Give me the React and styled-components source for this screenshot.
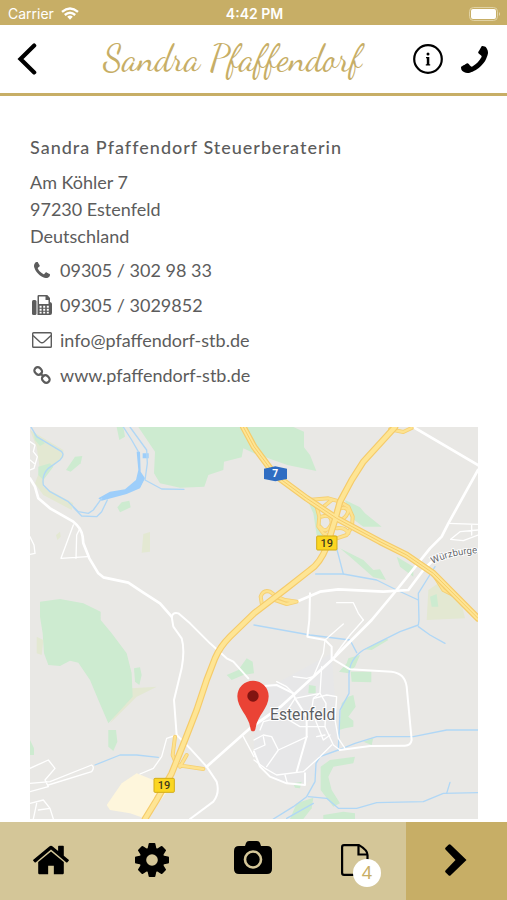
import React from 'react';
import styled, { createGlobalStyle } from 'styled-components';

const GlobalStyle = createGlobalStyle`
  * {
    box-sizing: border-box;
  }

  body {
    margin: 0;
    background: #ffffff;
    color: #5c5c5c;
    font-family: Lato, 'Noto Sans', sans-serif;
  }
`;

const Page = styled.div`
  display: flex;
  flex-direction: column;
  min-height: 100vh;
`;

const StatusBar = styled.div`
  display: grid;
  grid-template-columns: 1fr auto 1fr;
  align-items: center;
  height: 25px;
  padding: 2px 6px 0 8px;
  background: #c7ae66;
  color: #ffffff;
  font-family: Inter, sans-serif;
  font-size: 14px;
`;

const Carrier = styled.span`
  display: flex;
  align-items: center;
  gap: 7px;
`;

const Clock = styled.span`
  font-weight: 600;
`;

const BatteryIcon = styled.svg`
  justify-self: end;
`;

const Header = styled.header`
  display: flex;
  align-items: center;
  height: 71px;
  padding: 0 19px 0 16px;
  border-bottom: 3px solid #c7ae66;
`;

const HeaderActions = styled.div`
  display: flex;
  align-items: center;
  gap: 18px;
`;

const IconButton = styled.button`
  display: flex;
  padding: 0;
  border: 0;
  background: none;
  color: #000000;
  cursor: pointer;
`;

const Brand = styled.div`
  flex: 1;
  padding: 0 0 2px 14px;
  color: #c7ae66;
  font-family: 'Dancing Script', cursive;
  font-size: 36px;
  text-align: center;
  white-space: nowrap;
`;

const Main = styled.main`
  padding: 34px 29px 3px 30px;
`;

const Name = styled.h1`
  margin: 0;
  font-size: 18px;
  font-weight: 500;
  letter-spacing: 1px;
  line-height: 35px;
`;

const Address = styled.address`
  margin-top: 4px;
  font-size: 18px;
  font-style: normal;
  line-height: 27px;
`;

const ContactList = styled.ul`
  margin: 2px 0 35px;
  padding: 0;
  list-style: none;
`;

const ContactLink = styled.a`
  display: flex;
  align-items: center;
  gap: 6px;
  height: 35px;
  color: inherit;
  font-size: 18px;
  text-decoration: none;
`;

const ContactIcon = styled.span`
  display: flex;
  justify-content: center;
  width: 24px;
`;

const Map = styled.svg`
  display: block;
  width: 100%;
  height: auto;
  background: #e9e8e5;
  font-family: Roboto, sans-serif;
`;

const TabBar = styled.nav`
  position: sticky;
  bottom: 0;
  display: grid;
  grid-template-columns: repeat(5, 1fr);
  height: 78px;
  margin-top: auto;
  background: #d4c698;
`;

const Tab = styled.button`
  display: flex;
  align-items: center;
  justify-content: center;
  padding: 0 0 2px;
  border: 0;
  background: ${({ $active }) => ($active ? '#c7ae66' : 'transparent')};
  color: #000000;
  cursor: pointer;
`;

const BadgeAnchor = styled.span`
  position: relative;
  display: flex;
`;

const Badge = styled.span`
  position: absolute;
  right: -12px;
  bottom: -11px;
  width: 28px;
  height: 28px;
  border-radius: 50%;
  background: #ffffff;
  color: #c7ae66;
  font-family: 'Noto Sans', sans-serif;
  font-size: 18px;
  line-height: 27px;
  text-align: center;
`;

const PHONE_PATH =
  'M1408 1112q0 27-10 70.5t-21 68.5q-21 50-122 106-94 51-186 51-27 0-53-3.5t-57.5-12.5-47-14.5-55.5-20.5-49-18q-98-35-175-83-127-79-264-216t-216-264q-48-77-83-175-3-9-18-49t-20.5-55.5-14.5-47-12.5-57.5-3.5-53q0-92 51-186 56-101 106-122 25-11 68.5-21t70.5-10q14 0 21 3 18 6 53 76 11 19 30 54t35 63.5 31 53.5q3 4 17.5 25t21.5 35.5 7 28.5q0 20-28.5 50t-62 55-62 53-28.5 46q0 9 5 22.5t8.5 20.5 14 24 11.5 19q76 137 174 235t235 174q2 1 19 11.5t24 14 20.5 8.5 22.5 5q18 0 46-28.5t53-62 55-62 50-28.5q14 0 28.5 7t35.5 21.5 25 17.5q25 15 53.5 31t63.5 35 54 30q70 35 76 53 3 7 3 21z';

const WifiIcon = () => (
  <svg width="18" height="13" viewBox="0 0 18 13" fill="none" stroke="#ffffff" strokeWidth="2.4">
    <path d="M1 4.8Q9-2 17 4.8" />
    <path d="M3.8 8Q9 3.4 14.2 8" />
    <path d="M6.2 9.8Q9 7.4 11.8 9.8L9 12.8z" fill="#ffffff" stroke="none" />
  </svg>
);

const Battery = () => (
  <BatteryIcon width="32" height="14" viewBox="0 0 32 14">
    <rect x="0.5" y="0.5" width="28" height="13" rx="4" fill="none" stroke="#e0d2a4" />
    <rect x="2" y="2" width="25" height="10" rx="2" fill="#ffffff" />
    <path d="M30 5q2 2 0 4z" fill="#e6dab6" />
  </BatteryIcon>
);

const PhoneIcon = ({ size, flipped }) => (
  <svg width={size} height={size} viewBox="0 0 1408 1408" fill="currentColor">
    <path d={PHONE_PATH} transform={flipped ? 'translate(1408 0) scale(-1 1)' : undefined} />
  </svg>
);

const BackIcon = () => (
  <svg width="22" height="32" viewBox="0 0 22 32" fill="none" stroke="currentColor" strokeWidth="4.2">
    <path d="M18.200 2.600L4.500 16l13.700 13.400" strokeLinecap="round" />
  </svg>
);

const InfoIcon = () => (
  <svg width="30" height="30" viewBox="0 0 30 30">
    <circle cx="15" cy="15" r="13.8" fill="none" stroke="currentColor" strokeWidth="2.2" />
    <circle cx="15" cy="10" r="1.5" fill="currentColor" />
    <path d="M13 13h3.300v7.300h.9v1.200h-4.400v-1.200h1v-6h-.8z" fill="currentColor" />
  </svg>
);

const FaxIcon = () => (
  <svg width="20" height="20" viewBox="0 0 20 20" fill="currentColor">
    <rect x="0" y="5" width="4.5" height="15" rx="1.5" />
    <path
      fillRule="evenodd"
      d="M5.5 1.2Q5.5 0 6.7 0h8.6L18 3v4q2 .5 2 2v9q0 2-2 2H5.5zM7 1.5V9h9.5V5h-3V1.5zM7.6 10.8v2h2v-2zm3.6 0v2h2v-2zm3.6 0v2h2v-2zM7.6 13.8v2h2v-2zm3.6 0v2h2v-2zm3.6 0v2h2v-2zM7.6 16.8v1.6h2v-1.6zm3.6 0v1.6h2v-1.6zm3.6 0v1.6h2v-1.6z"
    />
  </svg>
);

const MailIcon = () => (
  <svg width="20" height="16" viewBox="0 0 20 16" fill="none" stroke="currentColor" strokeWidth="1.4">
    <rect x="0.7" y="0.7" width="18.6" height="14.6" rx="0.8" />
    <path d="M1 3.500l7 6.500q2 1.500 4 0l7-6.500" />
  </svg>
);

const LinkIcon = () => (
  <svg width="18" height="18" viewBox="0 0 18 18" fill="none" stroke="currentColor" strokeWidth="2.2">
    <rect x="1.200" y="1.700" width="8" height="6.600" rx="3.200" transform="rotate(45 5.200 5)" />
    <rect x="8.800" y="9.700" width="8" height="6.600" rx="3.200" transform="rotate(45 12.800 13)" />
    <path d="M7 7l4 4" />
  </svg>
);

const HomeIcon = () => (
  <svg width="36" height="30" viewBox="86 232 1620 1320" fill="currentColor">
    <path d="M1472 992v480q0 26-19 45t-45 19h-384v-384h-256v384h-384q-26 0-45-19t-19-45v-480q0-1 .5-3t.5-3l575-474 575 474q1 2 1 6zm223-69l-62 74q-8 9-21 11h-3q-13 0-21-7l-692-577-692 577q-12 8-24 7-13-2-21-11l-62-74q-8-10-7-23.5t11-21.5l719-599q32-26 76-26t76 26l244 204v-195q0-14 9-23t23-9h192q14 0 23 9t9 23v408l219 182q10 8 11 21.5t-7 23.5z" />
  </svg>
);

const GearIcon = () => (
  <svg width="34" height="34" viewBox="-17 -17 34 34">
    {[0, 45, 90, 135].map((angle) => (
      <path
        key={angle}
        d="M-3.400-16q0-1 1-1h4.800q1 0 1 1l1.100 5v22l-1.100 5q0 1-1 1h-4.800q-1 0-1-1l-1.100-5v-22z"
        transform={`rotate(${angle})`}
        fill="currentColor"
      />
    ))}
    <circle r="12.500" fill="currentColor" />
    <circle r="5.800" fill="#d4c698" />
  </svg>
);

const CameraIcon = () => (
  <svg width="38" height="38" viewBox="0 0 38 38">
    <path
      d="M5 5h6l1-3q.7-2 3-2h8q2.300 0 3 2l1 3h6q5 0 5 5v18q0 5-5 5H5q-5 0-5-5V10q0-5 5-5z"
      fill="currentColor"
    />
    <circle cx="19" cy="18.500" r="8" fill="none" stroke="#d4c698" strokeWidth="2.600" />
  </svg>
);

const DocumentIcon = () => (
  <svg width="28" height="32" viewBox="0 0 28 32" fill="none" stroke="currentColor" strokeWidth="2.200">
    <path d="M3 1.100h15Q26.500 6 26.500 11v19.900H3q-1.900 0-1.900-1.900V3q0-1.900 1.900-1.900z" />
    <path d="M17.500 1v9.500h9" />
  </svg>
);

const NextIcon = () => (
  <svg width="22" height="32" viewBox="0 0 22 32" fill="currentColor">
    <path d="M.5 5.500Q-.3 4.500.7 3.500L3.500.7Q4.600-.3 5.700.7L21.500 16 5.700 31.300Q4.600 32.300 3.500 31.300L.7 28.500Q-.3 27.500.5 26.500L10.500 16z" />
  </svg>
);

const woods = [
  'M325 21L375 95L372 160L390 190L450 203L523 200L535 165L580 150L582 125L635 112L640 85L672 100L715 115L772 135L859 153L840 105L822 82V35L790 21z',
  'M30 545L90 537L160 550L212 575V600L245 640L290 700L305 760L308 830L235 910L205 840L180 780L145 728L120 722L90 738L55 735L42 700L38 640L30 590z',
  'M135 110L157 108L152 130L122 155L108 150z',
  'M262 262L275 247L298 242L302 262L270 277z',
  'M260 21H280L285 50L268 60z',
  'M25 140L60 130L70 140L40 180L25 165z',
  'M10 35L45 70L30 78L15 60z',
  'M312 745L330 742L335 765L328 795L315 785z',
  'M235 930L258 930L262 965L250 993L235 980z',
  'M0 960L12 985V1005H0z',
  'M832 240L860 240L880 350L860 345L850 280z',
  'M945 240L990 262L1005 280L1055 320L1000 320L960 290z',
  'M930 385L1000 420L1030 450L1050 448L1068 480L1030 472L960 410z',
  'M1100 410L1150 440V470L1110 440z',
  'M1200 530L1220 522L1225 560L1205 560z',
  'M590 765L625 750L650 715L668 725L672 760L640 765L605 780z',
  'M837 795L857 798V820L835 820z',
  'M962 755H1024V787L965 785z',
  'M927 755L950 730L955 715L990 705L975 740L955 760z',
  'M935 850L955 830L970 825L977 860L955 890L970 902V920L945 925L928 930z',
  'M1000 965L1030 955L1025 975z',
  'M872 1040L900 1020L975 1010L970 1030L910 1040L895 1070L905 1110L930 1150L910 1160L872 1110z',
  'M780 1197L800 1150L850 1133L845 1165L820 1197z',
  'M880 1185L940 1175L975 1180V1197H880z',
  'M790 1090L815 1085L810 1105L795 1103z',
  'M1002 688L1070 655L1075 660L1025 690z',
];

const meadows = [
  'M0 30L100 90V112L45 160L40 200L130 250L125 270L40 225L15 190L30 150L20 80z',
  'M340 342L360 336V395L335 398z',
  'M78 345L90 335L92 350L82 360z',
  'M1225 490L1290 530L1305 595L1190 600L1195 510z',
  'M305 805L380 800L320 830L240 910z',
  'M20 650L40 660L35 705L20 700z',
];

const streams = [
  'M3 21L20 50L95 95Q105 105 90 120L55 145Q35 165 40 195L60 215L115 245L145 275L175 280L190 270L215 235',
  'M130 262L155 288L200 290L215 275L232 240',
  'M280 21L305 60L325 95',
  'M300 21L350 90L352 130L345 180L395 207L462 208',
  'M195 1035L270 1005L320 1005L385 1012',
  'M857 462H940L1040 480L1100 510L1165 540',
  'M920 385L940 462',
  'M1215 440L1190 480L1165 520L1167 600L1165 615L1110 635L1050 665L1000 690Q955 720 957 770V820L930 870L925 990L870 1010L858 1030L855 1085L830 1130L790 1160L730 1197',
  'M672 615L840 645L960 660L980 698',
  'M1165 620L1200 645L1245 670',
  'M925 990L975 970L1040 950L1150 950L1250 930L1344 930',
  'M835 1130L890 1135L925 1165L980 1165L1040 1148L1180 1145L1240 1120L1344 1118',
  'M1250 1120L1260 1087',
  'M770 1195L850 1150',
];

const roads = [
  'M0 175L15 200L25 235L60 265L130 305Q155 325 158 350L160 370L178 415L205 460L220 472L295 488L340 518L390 550L425 590',
  'M1150 21L1344 135',
  'M1344 150L1255 310L1235 350L1200 385L1100 510L1025 600L905 720L752 860L660 925L530 1040',
  'M800 545L870 515L925 508L1060 515L1135 510L1180 450L1210 420Q1270 385 1344 390',
];

const streets = [
  'M425 590L430 620L455 655Q465 690 455 745L432 840L440 945',
  'M425 590Q430 575 445 580L480 610L540 670L590 715L610 725L655 775',
  'M440 945L480 985L530 1040L560 1085Q570 1120 550 1145L480 1197',
  'M840 520L838 600L832 650L885 660L905 680V715',
  'M905 715L960 748L1085 755Q1125 760 1130 800L1145 960Q1142 977 1125 977L1020 978L930 990',
  'M672 800L740 795L790 820L795 835L830 890V950L810 1020L800 1055',
  'M672 995L690 1040L720 1070L770 1090L825 1095V1060',
];

const lanes = [
  'M130 315L93 415L172 410M150 325L140 345L138 415',
  'M0 65L15 75L10 95L22 110L12 145L0 150M0 120L12 130',
  'M0 350L12 375L15 400L0 403',
  'M920 548L970 548L985 580L1000 600',
  'M1255 310L1344 313M1262 358L1290 335L1344 330M1262 358L1300 362L1344 345M1325 315V345',
  'M905 720L850 770L830 775L790 770',
  'M1000 600L960 645L915 705M940 612L885 660L880 700L850 770',
  'M875 740L870 820L888 850L885 920L910 975L930 990',
  'M852 835L890 825L920 830L915 900L925 955L945 985',
  'M672 1020L705 1045L740 1065L820 1055L870 1010L905 975',
  'M710 1040L745 990L832 950M745 990L725 950L700 945L672 960',
  'M672 990L705 975L700 950M640 950L672 1010',
  'M795 835L870 820L850 835L845 870L860 910L880 960L900 945',
  'M690 930L700 905L760 890L795 835M760 890L810 920L885 920',
  'M740 785L770 800L790 820M860 950L885 945M765 1065L772 1090',
  'M440 945L410 955L395 1010L370 1045L330 1062',
  'M0 1045L55 1020L75 1045L45 1080L55 1100L0 1115M0 1090L60 1085L185 1035Q195 1042 185 1055L55 1095',
  'M0 1150L40 1140L60 1165L70 1197M20 1150L10 1197M25 1170L60 1165',
];

const ramps = [
  'M835 240L895 235L930 245L955 260L968 290L966 320L950 345L920 355L880 340L865 320L868 290L860 260L835 240',
  'M875 290Q905 280 905 310Q890 345 870 320M920 270Q950 255 955 275Q945 300 925 300M905 240L875 265M920 325Q945 320 955 340',
  'M1080 28L1120 36L1145 24',
  'M697 560L692 530Q700 508 720 515L740 530L765 540L800 545L770 552L735 540',
  'M435 950L428 1005L440 1035L520 1047M470 1005L450 1040',
  'M1215 470L1240 510L1270 525',
];

const highways = [
  'M640 21L672 80L735 165L830 235L920 295L1050 365L1130 405L1210 460L1344 595',
  'M1095 21L1000 125L965 180L930 245L915 300L890 380Q870 430 840 450L770 505L672 580L600 650Q570 680 555 715L530 780L500 870L465 960L425 1060L380 1140L345 1197',
];

const Lines = ({ paths, color, width }) => (
  <g fill="none" stroke={color} strokeWidth={width} strokeLinejoin="round" strokeLinecap="round">
    {paths.map((d) => (
      <path key={d} d={d} />
    ))}
  </g>
);

const Areas = ({ paths, color }) => (
  <g fill={color}>
    {paths.map((d) => (
      <path key={d} d={d} />
    ))}
  </g>
);

const RoadSign = ({ x, y }) => (
  <g>
    <rect x={x} y={y} width="61" height="42" rx="3" fill="#fbd622" stroke="#d3ac18" strokeWidth="3" />
    <text x={x + 30} y={y + 33} fill="#3e3a1c" fontSize="33" fontWeight="500" textAnchor="middle">
      19
    </text>
  </g>
);

const LocationMap = () => (
  <Map viewBox="0 21 1344 1176" role="img" aria-label="Estenfeld">
    <path d="M672 800L740 790L905 700L925 980L830 1090L740 1085L672 1010z" fill="#e7e7e8" />
    <Areas paths={meadows} color="#e3e8d2" />
    <Areas paths={woods} color="#cdebd0" />
    <path d="M320 1060L370 1080L415 1110L350 1197L300 1180L240 1170L230 1155L275 1090z" fill="#fef6dc" />
    <path
      d="M320 95L330 95L332 155L345 175L330 205L290 222L215 242L205 235L240 215L285 208L318 180L325 150zM338 100L356 100V115L338 115z"
      fill="#9dcefa"
    />
    <Lines paths={streams} color="#b0d7f6" width="4" />
    <Lines paths={lanes} color="#ffffff" width="4" />
    <Lines paths={streets} color="#ffffff" width="6" />
    <Lines paths={roads} color="#ffffff" width="8" />
    <Lines paths={ramps} color="#f5cf72" width="12" />
    <Lines paths={ramps} color="#fde28f" width="7" />
    <Lines paths={highways} color="#f5cb6a" width="20" />
    <Lines paths={highways} color="#fee594" width="13" />
    <Lines paths={highways.slice(0, 1)} color="#f5cb6a" width="3" />
    <path d="M702 146L736 139L771 146V177L736 184L702 177z" fill="#2f6dc2" />
    <text x="736" y="172" fill="#ffffff" fontSize="31" fontWeight="700" textAnchor="middle">
      7
    </text>
    <RoadSign x={860} y={348} />
    <RoadSign x={372} y={1075} />
    <path id="street-label" d="M1208 432Q1266 402 1356 399" fill="none" />
    <text fill="#66686c" fontSize="29" stroke="#ffffff" strokeWidth="5" paintOrder="stroke">
      <textPath href="#street-label">Würzburge</textPath>
    </text>
    <text x="720" y="900" fill="#5c6064" fontSize="47" stroke="#ffffff" strokeWidth="6" paintOrder="stroke">
      Estenfeld
    </text>
    <path
      d="M669 934C664 934 662 930 661 923C656 888 622 864 622 829A47 47 0 0 1 716 829C716 864 682 888 677 923C676 930 674 934 669 934z"
      fill="#ea4335"
    />
    <circle cx="669" cy="828" r="17" fill="#811411" />
  </Map>
);

const contacts = [
  { href: 'tel:093053029833', label: '09305 / 302 98 33', icon: <PhoneIcon size={16} /> },
  { href: 'tel:093053029852', label: '09305 / 3029852', icon: <FaxIcon /> },
  { href: 'mailto:info@pfaffendorf-stb.de', label: 'info@pfaffendorf-stb.de', icon: <MailIcon /> },
  { href: 'http://www.pfaffendorf-stb.de', label: 'www.pfaffendorf-stb.de', icon: <LinkIcon /> },
];

const App = () => (
  <Page>
    <GlobalStyle />
    <StatusBar>
      <Carrier>
        Carrier
        <WifiIcon />
      </Carrier>
      <Clock>4:42 PM</Clock>
      <Battery />
    </StatusBar>
    <Header>
      <IconButton aria-label="Zurück">
        <BackIcon />
      </IconButton>
      <Brand>Sandra Pfaffendorf</Brand>
      <HeaderActions>
        <IconButton aria-label="Info">
          <InfoIcon />
        </IconButton>
        <IconButton aria-label="Anrufen">
          <PhoneIcon size={27} flipped />
        </IconButton>
      </HeaderActions>
    </Header>
    <Main>
      <Name>Sandra Pfaffendorf Steuerberaterin</Name>
      <Address>
        Am Köhler 7
        <br />
        97230 Estenfeld
        <br />
        Deutschland
      </Address>
      <ContactList>
        {contacts.map(({ href, label, icon }) => (
          <li key={href}>
            <ContactLink href={href}>
              <ContactIcon>{icon}</ContactIcon>
              {label}
            </ContactLink>
          </li>
        ))}
      </ContactList>
      <LocationMap />
    </Main>
    <TabBar>
      <Tab aria-label="Start">
        <HomeIcon />
      </Tab>
      <Tab aria-label="Einstellungen">
        <GearIcon />
      </Tab>
      <Tab aria-label="Kamera">
        <CameraIcon />
      </Tab>
      <Tab aria-label="Dokumente">
        <BadgeAnchor>
          <DocumentIcon />
          <Badge>4</Badge>
        </BadgeAnchor>
      </Tab>
      <Tab $active aria-label="Weiter">
        <NextIcon />
      </Tab>
    </TabBar>
  </Page>
);

export default App;
